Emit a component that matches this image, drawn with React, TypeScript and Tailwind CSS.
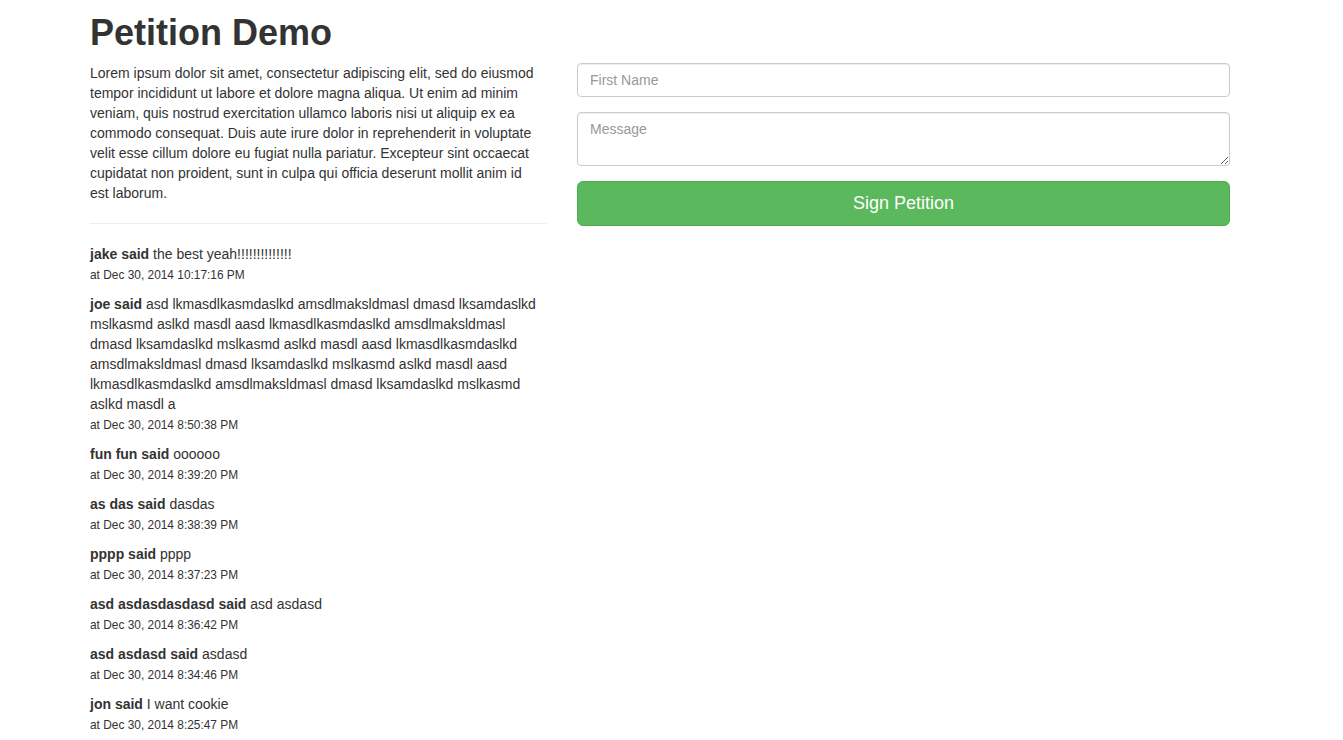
import React from "react";

const para = [
  "Lorem ipsum dolor sit amet, consectetur adipiscing elit, sed do eiusmod",
  "tempor incididunt ut labore et dolore magna aliqua. Ut enim ad minim",
  "veniam, quis nostrud exercitation ullamco laboris nisi ut aliquip ex ea",
  "commodo consequat. Duis aute irure dolor in reprehenderit in voluptate",
  "velit esse cillum dolore eu fugiat nulla pariatur. Excepteur sint occaecat",
  "cupidatat non proident, sunt in culpa qui officia deserunt mollit anim id",
  "est laborum.",
];

type C = { name: string; lines: string[]; at: string };

const comments: C[] = [
  { name: "jake", lines: ["the best yeah!!!!!!!!!!!!!!"], at: "Dec 30, 2014 10:17:16 PM" },
  {
    name: "joe",
    lines: [
      "asd lkmasdlkasmdaslkd amsdlmaksldmasl dmasd lksamdaslkd",
      "mslkasmd aslkd masdl aasd lkmasdlkasmdaslkd amsdlmaksldmasl",
      "dmasd lksamdaslkd mslkasmd aslkd masdl aasd lkmasdlkasmdaslkd",
      "amsdlmaksldmasl dmasd lksamdaslkd mslkasmd aslkd masdl aasd",
      "lkmasdlkasmdaslkd amsdlmaksldmasl dmasd lksamdaslkd mslkasmd",
      "aslkd masdl a",
    ],
    at: "Dec 30, 2014 8:50:38 PM",
  },
  { name: "fun fun", lines: ["oooooo"], at: "Dec 30, 2014 8:39:20 PM" },
  { name: "as das", lines: ["dasdas"], at: "Dec 30, 2014 8:38:39 PM" },
  { name: "pppp", lines: ["pppp"], at: "Dec 30, 2014 8:37:23 PM" },
  { name: "asd asdasdasdasd", lines: ["asd asdasd"], at: "Dec 30, 2014 8:36:42 PM" },
  { name: "asd asdasd", lines: ["asdasd"], at: "Dec 30, 2014 8:34:46 PM" },
  { name: "jon", lines: ["I want cookie"], at: "Dec 30, 2014 8:25:47 PM" },
];

export default function App() {
  return (
    <div
      className="min-h-screen bg-white text-[#333] text-[14px] leading-[20px]"
      style={{ fontFamily: '"Liberation Sans", Arial, Helvetica, sans-serif' }}
    >
      <div className="w-[1170px] ml-[75px] px-[15px]">
        <h1 className="mt-[13px] mb-[10px] text-[36px] leading-[1.1] font-bold">Petition Demo</h1>
        <div className="flex -mx-[15px]">
          <div className="w-[487px] px-[15px]">
            <p className="mb-[10px]">
              {para.map((l, i) => (
                <span key={i} className="block whitespace-nowrap">
                  {l}
                </span>
              ))}
            </p>
            <hr className="my-[20px] border-0 border-t border-[#eee]" />
            <div>
              {comments.map((c, i) => (
                <p key={i} className="mb-[10px]">
                  {c.lines.map((l, j) => (
                    <span key={j} className="block whitespace-nowrap">
                      {j === 0 && <strong className="font-bold">{c.name} said</strong>}
                      {j === 0 ? " " : ""}
                      {l}
                    </span>
                  ))}
                  <span className="block h-[20px] whitespace-nowrap">
                    <small className="text-[11.9px] leading-none">at {c.at}</small>
                  </span>
                </p>
              ))}
            </div>
          </div>
          <div className="w-[683px] px-[15px]">
            <div className="mb-[15px]">
              <input
                type="text"
                placeholder="First Name"
                className="block w-full h-[34px] px-[12px] py-[6px] text-[14px] leading-[20px] text-[#555] bg-white border border-[#ccc] rounded-[4px] shadow-[inset_0_1px_1px_rgba(0,0,0,0.075)] placeholder:text-[#999] outline-none"
              />
            </div>
            <div className="mb-[15px]">
              <textarea
                rows={2}
                placeholder="Message"
                className="block w-full h-[54px] px-[12px] py-[6px] text-[14px] leading-[20px] text-[#555] bg-white border border-[#ccc] rounded-[4px] shadow-[inset_0_1px_1px_rgba(0,0,0,0.075)] placeholder:text-[#999] outline-none"
              />
            </div>
            <button className="block w-full h-[45px] px-[16px] text-[18px] leading-[24px] text-white bg-[#5cb85c] border border-[#4cae4c] rounded-[6px]">
              Sign Petition
            </button>
          </div>
        </div>
      </div>
    </div>
  );
}
